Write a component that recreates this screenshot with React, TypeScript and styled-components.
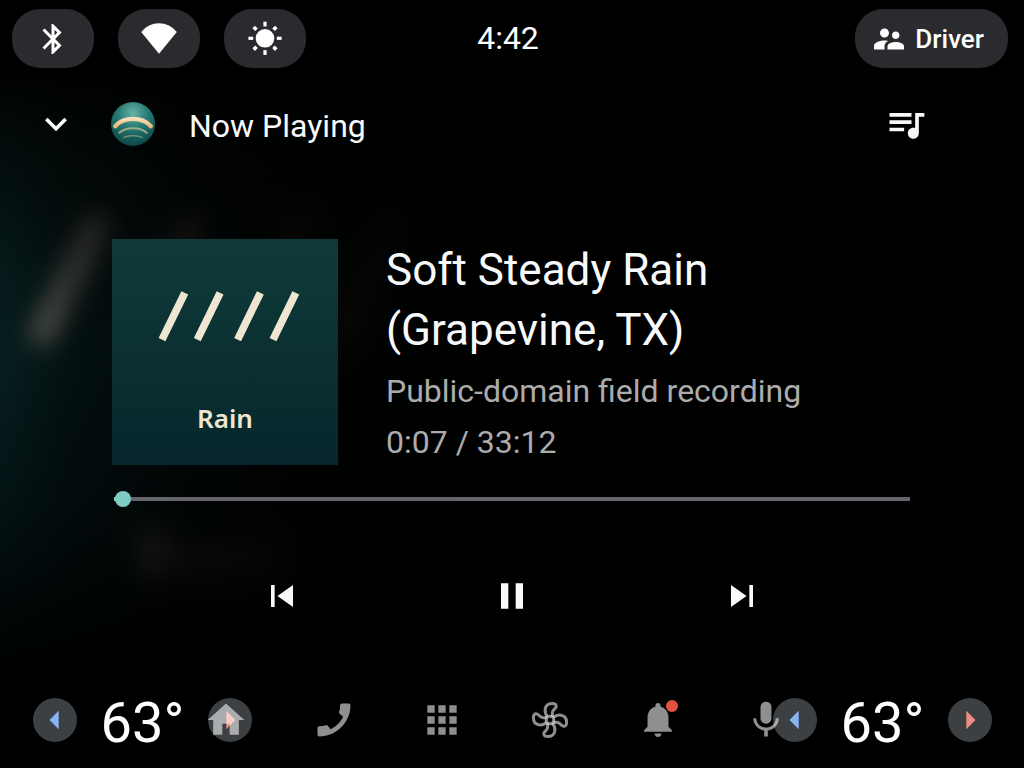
import React, { useState } from "react";
import styled, { createGlobalStyle } from "styled-components";

const GlobalStyle = createGlobalStyle`
  *, *::before, *::after { box-sizing: border-box; }
  body {
    margin: 0;
    background: #000;
    color: #f8f9fa;
    font-family: Roboto, "Liberation Sans", sans-serif;
  }
  button {
    border: 0;
    padding: 0;
    margin: 0;
    background: none;
    color: inherit;
    font: inherit;
    cursor: pointer;
  }
  svg { display: block; }
  h1, h2, p { margin: 0; font-weight: 400; }
`;

const Screen = styled.div`
  position: relative;
  isolation: isolate;
  min-height: 100vh;
  display: flex;
  flex-direction: column;
  overflow: hidden;
`;

const Backdrop = styled.div`
  position: absolute;
  inset: 0;
  z-index: -1;
  overflow: hidden;
  mask-image: linear-gradient(
      to right,
      rgba(0, 0, 0, 0.6) 0,
      rgba(0, 0, 0, 0.34) 70px,
      rgba(0, 0, 0, 0.13) 190px,
      rgba(0, 0, 0, 0.06) 300px,
      rgba(0, 0, 0, 0.02) 420px,
      transparent 540px
    ),
    linear-gradient(
      to bottom,
      transparent 60px,
      rgba(0, 0, 0, 0.4) 160px,
      rgba(0, 0, 0, 0.8) 270px,
      #000 370px,
      rgba(0, 0, 0, 0.7) 510px,
      rgba(0, 0, 0, 0.3) 600px,
      transparent 680px
    );
  mask-composite: intersect;
`;

const BackdropArt = styled.div`
  position: absolute;
  left: -95px;
  top: 70px;
  width: 610px;
  filter: blur(13px);
`;

const TopBar = styled.header`
  display: grid;
  grid-template-columns: 1fr auto 1fr;
  align-items: center;
  padding: 9px 16px 9px 12px;
`;

const StatusGroup = styled.div`
  display: flex;
  gap: 24px;
`;

const StatusPill = styled.button`
  display: flex;
  align-items: center;
  justify-content: center;
  width: 82px;
  height: 59px;
  border-radius: 28px;
  background: #2a2b2f;
  color: #fff;
`;

const Clock = styled.time`
  font-size: 32px;
  line-height: 40px;
  color: #fff;
  margin-right: 4px;
  padding-bottom: 2px;
`;

const DriverPill = styled(StatusPill)`
  justify-self: end;
  width: auto;
  gap: 8px;
  padding: 0 24px 0 16px;
  font-size: 26px;
  font-weight: 500;
`;

const Main = styled.main`
  flex: 1;
  display: flex;
  flex-direction: column;
`;

const PlayerHeader = styled.div`
  display: flex;
  align-items: center;
  height: 94px;
  padding: 0 96px 0 34px;
`;

const IconButton = styled.button`
  flex: none;
  width: 44px;
  height: 44px;
`;

const AppLogo = styled.svg`
  flex: none;
  margin: 0 34px 0 33px;
`;

const HeaderTitle = styled.h2`
  flex: 1;
  font-size: 32px;
  line-height: 44px;
  padding-top: 4px;
`;

const NowPlaying = styled.section`
  display: flex;
  gap: 48px;
  padding: 68px 112px 0;
`;

const Cover = styled.div`
  flex: none;
  width: 226px;
`;

const Details = styled.div`
  flex: 1;
  min-width: 0;
  display: flex;
  flex-direction: column;
  padding-top: 1px;
`;

const TrackTitle = styled.h1`
  font-size: 44px;
  line-height: 60px;
  margin-bottom: 7px;
`;

const TrackMeta = styled.p`
  font-size: 32px;
  line-height: 48px;
  color: #acacac;

  & + & { margin-top: 3px; }
`;

const SeekRow = styled.div`
  display: flex;
  padding: 25px 114px 0 112px;
`;

const SeekBar = styled.input`
  appearance: none;
  width: 100%;
  height: 16px;
  margin: 0;
  background: transparent;

  &::-webkit-slider-runnable-track {
    height: 4px;
    background: linear-gradient(to right, transparent 2px, #80cbc4 2px, #80cbc4 10px, #64646a 10px);
  }
  &::-webkit-slider-thumb {
    appearance: none;
    width: 16px;
    height: 16px;
    margin-top: -6px;
    border-radius: 50%;
    background: #80cbc4;
  }
`;

const Transport = styled.div`
  display: flex;
  justify-content: center;
  gap: 186px;
  padding: 67px 0 32px;
`;

/* The climate controls and the navigation share one grid cell, so they may overlap. */
const BottomBar = styled.footer`
  display: grid;
  align-items: center;
  height: 96px;
  padding: 0 32px 0 33px;

  & > * { grid-area: 1 / 1; }
`;

const Climate = styled.div<{ $side: "start" | "end" }>`
  justify-self: ${(p) => p.$side};
  width: 219px;
  display: flex;
  align-items: center;
  justify-content: space-between;
`;

const TempButton = styled.button<{ $tone: string }>`
  width: 44px;
  height: 44px;
  border-radius: 50%;
  background: #3c4043;
  color: ${(p) => p.$tone};
`;

const Temperature = styled.output`
  font-size: 56px;
  line-height: 64px;
  color: #fff;
  padding-top: 6px;
`;

const NavBar = styled.nav`
  justify-self: center;
  display: flex;
  gap: 64px;
  margin-right: 34px;
`;

const NavButton = styled.button`
  position: relative;
  width: 44px;
  height: 44px;
  color: rgba(255, 255, 255, 0.56);
`;

const Badge = styled.span`
  position: absolute;
  top: 2px;
  right: 2px;
  width: 12px;
  height: 12px;
  border-radius: 50%;
  background: #e35142;
`;

const paths = {
  bluetooth:
    "M17.71 7.71L12 2h-1v7.59L6.41 5 5 6.41 10.59 12 5 17.59 6.41 19 11 14.41V22h1l5.71-5.71-4.3-4.29 4.3-4.29zM13 5.83l1.88 1.88L13 9.59V5.83zm1.88 10.46L13 18.17v-3.76l1.88 1.88z",
  people:
    "M16.5 12c1.38 0 2.49-1.12 2.49-2.5S17.88 7 16.5 7C15.12 7 14 8.12 14 9.5s1.12 2.5 2.5 2.5zM9 11c1.66 0 2.99-1.34 2.99-3S10.66 5 9 5C7.34 5 6 6.34 6 8s1.34 3 3 3zm7.5 3c-1.83 0-5.5.92-5.5 2.75V19h11v-2.25c0-1.83-3.67-2.75-5.5-2.75zM9 13c-2.33 0-7 1.17-7 3.5V19h7v-2.25c0-.85.33-2.34 2.37-3.47C10.5 13.1 9.66 13 9 13z",
  expand: "M16.59 8.59L12 13.17 7.41 8.59 6 10l6 6 6-6z",
  queue:
    "M15 6H3v2h12V6zm0 4H3v2h12v-2zM3 16h8v-2H3v2zM17 6v8.18c-.31-.11-.65-.18-1-.18-1.66 0-3 1.34-3 3s1.34 3 3 3 3-1.34 3-3V8h3V6h-5z",
  previous: "M6 6h2v12H6zm3.5 6l8.5 6V6z",
  pause: "M6 19h4V5H6v14zm8-14v14h4V5h-4z",
  play: "M8 5v14l11-7z",
  next: "M6 18l8.5-6L6 6v12zM16 6v12h2V6h-2z",
  left: "M14 7l-5 5 5 5V7z",
  right: "M10 17l5-5-5-5v10z",
  home: "M10 20v-6h4v6h5v-8h3L12 3 2 12h3v8z",
  phone:
    "M3.99 15.38c1.23 0 2.42-.2 3.53-.56.35-.12.74-.03 1.01.24l1.57 1.97c2.83-1.35 5.48-3.9 6.89-6.83l-1.95-1.66c-.27-.28-.35-.67-.24-1.02.37-1.11.56-2.3.56-3.53 0-.54.45-.99.99-.99h3.46C20.35 3 21 3.24 21 3.99 21 13.28 13.27 21 3.99 21 3.28 21 3 20.37 3 19.82v-3.45c0-.54.45-.99.99-.99z",
  apps: "M4 8h4V4H4v4zm6 12h4v-4h-4v4zm-6 0h4v-4H4v4zm0-6h4v-4H4v4zm6 0h4v-4h-4v4zm6-10v4h4V4h-4zm-6 4h4V4h-4v4zm6 6h4v-4h-4v4zm0 6h4v-4h-4v4z",
  bell: "M12 22c1.1 0 2-.9 2-2h-4c0 1.1.89 2 2 2zm6-6v-5c0-3.07-1.64-5.64-4.5-6.32V4c0-.83-.67-1.5-1.5-1.5s-1.5.67-1.5 1.5v.68C7.63 5.36 6 7.92 6 11v5l-2 2v1h16v-1l-2-2z",
  mic: "M12 14c1.66 0 2.99-1.34 2.99-3L15 5c0-1.66-1.34-3-3-3S9 3.34 9 5v6c0 1.66 1.34 3 3 3zm5.3-3c0 3-2.54 5.1-5.3 5.1S6.7 14 6.7 11H5c0 3.41 2.72 6.23 6 6.72V21h2v-3.28c3.28-.48 6-3.3 6-6.72h-1.7z",
};

function Icon({ name, size = 44, viewBox = "0 0 24 24" }: { name: keyof typeof paths; size?: number; viewBox?: string }) {
  return (
    <svg width={size} height={size} viewBox={viewBox} fill="currentColor" aria-hidden="true">
      <path d={paths[name]} />
    </svg>
  );
}

function WifiIcon() {
  return (
    <svg width="36" height="36" viewBox="0 0 36 36" fill="currentColor" aria-hidden="true">
      <path d="M.2 10.9A22.6 22.6 0 0 1 35.8 10.9L18 32.8z" />
    </svg>
  );
}

function BrightnessIcon() {
  return (
    <svg width="36" height="36" viewBox="-18 -18 36 36" fill="currentColor" aria-hidden="true">
      <g transform="translate(0 -.7)">
        <circle r="9.3" />
        {[0, 90, 180, 270].map((a) => (
          <rect key={a} x="-1.6" y="-16.6" width="3.2" height="4.8" transform={`rotate(${a})`} />
        ))}
        {[45, 135, 225, 315].map((a) => (
          <rect key={a} x="-1.8" y="-16" width="3.6" height="4" transform={`rotate(${a})`} />
        ))}
      </g>
    </svg>
  );
}

function FanIcon() {
  return (
    <svg width="44" height="44" viewBox="-22 -22 44 44" fill="none" stroke="currentColor" strokeWidth="3" aria-hidden="true">
      <circle r="3.8" />
      {[0, 90, 180, 270].map((a) => (
        <path
          key={a}
          d="M-2.4 -3.4C-4.6 -5.6 -5.2 -8.2 -4.8 -11C-4.2 -14.6 -1.2 -16.6 2.2 -16.6C5.2 -16.6 6.6 -15.2 6.1 -13.2C5.5 -11 2.8 -10.4 2.4 -7.6C2.2 -6 2.4 -5 2.6 -3.4"
          transform={`rotate(${a})`}
        />
      ))}
    </svg>
  );
}

function Logo() {
  return (
    <AppLogo width="44" height="44" viewBox="0 0 44 44" aria-hidden="true">
      <defs>
        <radialGradient id="logoBall" cx="0.5" cy="0.25" r="0.75">
          <stop offset="0" stopColor="#68b3a6" />
          <stop offset="0.45" stopColor="#277a74" />
          <stop offset="1" stopColor="#0b4645" />
        </radialGradient>
        <linearGradient id="logoArc" x1="0" y1="0" x2="0" y2="1">
          <stop offset="0" stopColor="#f8dfb8" />
          <stop offset="1" stopColor="#e9b77c" />
        </linearGradient>
      </defs>
      <circle cx="22" cy="22" r="22" fill="url(#logoBall)" />
      <g fill="none" strokeLinecap="round">
        <path d="M4.2 24.2C13 14.4 31 14.4 39.8 24.2" stroke="url(#logoArc)" strokeWidth="4.4" />
        <path d="M8.2 30.8C15 24.8 29 24.8 35.8 30.8" stroke="#c9bf92" strokeWidth="2" opacity="0.75" />
        <path d="M12.8 35.4C18 33 26 33 31.2 35.4" stroke="#a9b58f" strokeWidth="1.4" opacity="0.65" />
      </g>
    </AppLogo>
  );
}

function RainArt({ id, label }: { id: string; label?: string }) {
  return (
    <svg width="100%" viewBox="0 0 226 226" aria-hidden={label ? undefined : true}>
      <defs>
        <linearGradient id={id} x1="0" y1="0" x2="0" y2="1">
          <stop offset="0" stopColor="#103b3a" />
          <stop offset="1" stopColor="#06262b" />
        </linearGradient>
      </defs>
      <rect width="226" height="226" fill={`url(#${id})`} />
      <path
        d="M50 100.6L72.8 53.8M85.3 100.6L108.1 53.8M125.6 100.6L148.4 53.8M161 100.6L183.8 53.8"
        stroke="#efe6d2"
        strokeWidth="7.6"
      />
      {label ? (
        <text
          x="113"
          y="189"
          textAnchor="middle"
          fill="#efe6d2"
          fontFamily='"Noto Sans", "Open Sans", sans-serif'
          fontSize="26"
          fontWeight="600"
        >
          {label}
        </text>
      ) : (
        <g fill="#efe6d2">
          <rect x="86" y="171" width="14" height="18" opacity="0.7" />
          <rect x="102" y="175" width="38" height="14" opacity="0.5" />
        </g>
      )}
    </svg>
  );
}

function ClimateZone({ side, label }: { side: "start" | "end"; label: string }) {
  const [temp, setTemp] = useState(63);
  return (
    <Climate $side={side} role="group" aria-label={label}>
      <TempButton $tone="#8ab4f8" aria-label="Cooler" onClick={() => setTemp(temp - 1)}>
        <Icon name="left" />
      </TempButton>
      <Temperature>{temp}°</Temperature>
      <TempButton $tone="#f28b82" aria-label="Warmer" onClick={() => setTemp(temp + 1)}>
        <Icon name="right" />
      </TempButton>
    </Climate>
  );
}

const duration = 33 * 60 + 12;
const formatTime = (s: number) => `${Math.floor(s / 60)}:${String(s % 60).padStart(2, "0")}`;

export default function App() {
  const [position, setPosition] = useState(7);
  const [playing, setPlaying] = useState(true);

  return (
    <>
      <GlobalStyle />
      <Screen>
        <Backdrop aria-hidden="true">
          <BackdropArt>
            <RainArt id="backdropFill" />
          </BackdropArt>
        </Backdrop>

        <TopBar>
          <StatusGroup>
            <StatusPill aria-label="Bluetooth">
              <Icon name="bluetooth" size={36} />
            </StatusPill>
            <StatusPill aria-label="Wi-Fi">
              <WifiIcon />
            </StatusPill>
            <StatusPill aria-label="Brightness">
              <BrightnessIcon />
            </StatusPill>
          </StatusGroup>
          <Clock>4:42</Clock>
          <DriverPill>
            <Icon name="people" size={36} />
            Driver
          </DriverPill>
        </TopBar>

        <Main>
          <PlayerHeader>
            <IconButton aria-label="Collapse">
              <Icon name="expand" />
            </IconButton>
            <Logo />
            <HeaderTitle>Now Playing</HeaderTitle>
            <IconButton aria-label="Queue">
              <Icon name="queue" />
            </IconButton>
          </PlayerHeader>

          <NowPlaying>
            <Cover>
              <RainArt id="coverFill" label="Rain" />
            </Cover>
            <Details>
              <TrackTitle>Soft Steady Rain (Grapevine, TX)</TrackTitle>
              <TrackMeta>Public-domain field recording</TrackMeta>
              <TrackMeta>
                {formatTime(position)} / {formatTime(duration)}
              </TrackMeta>
            </Details>
          </NowPlaying>

          <SeekRow>
            <SeekBar
              type="range"
              aria-label="Playback position"
              min={0}
              max={duration}
              value={position}
              onChange={(e) => setPosition(Number(e.target.value))}
            />
          </SeekRow>

          <Transport>
            <IconButton aria-label="Previous">
              <Icon name="previous" />
            </IconButton>
            <IconButton aria-label={playing ? "Pause" : "Play"} onClick={() => setPlaying(!playing)}>
              <Icon name={playing ? "pause" : "play"} />
            </IconButton>
            <IconButton aria-label="Next">
              <Icon name="next" />
            </IconButton>
          </Transport>
        </Main>

        <BottomBar>
          <ClimateZone side="start" label="Driver temperature" />
          <NavBar aria-label="Main">
            <NavButton aria-label="Home">
              <Icon name="home" />
            </NavButton>
            <NavButton aria-label="Phone">
              <Icon name="phone" />
            </NavButton>
            <NavButton aria-label="Apps">
              <Icon name="apps" />
            </NavButton>
            <NavButton aria-label="Climate">
              <FanIcon />
            </NavButton>
            <NavButton aria-label="Notifications">
              <Icon name="bell" viewBox="-.6 -.4 25.2 25.2" />
              <Badge />
            </NavButton>
            <NavButton aria-label="Assistant">
              <Icon name="mic" />
            </NavButton>
          </NavBar>
          <ClimateZone side="end" label="Passenger temperature" />
        </BottomBar>
      </Screen>
    </>
  );
}
